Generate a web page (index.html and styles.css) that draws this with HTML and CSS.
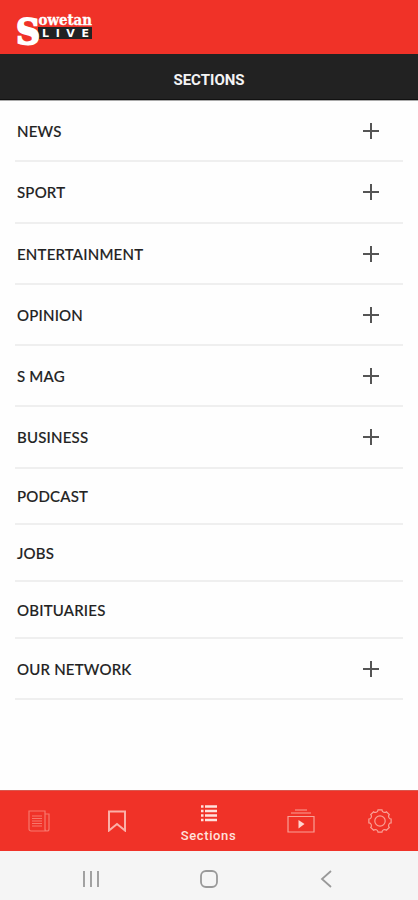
FILE: index.html
```html
<!DOCTYPE html>
<html lang="en">
    <head>
        <meta charset="UTF-8" />
        <meta name="viewport" content="width=device-width, initial-scale=1.0" />
        <title>Sowetan LIVE - Sections</title>
        <link rel="stylesheet" href="styles.css">
    </head>

    <body>
        <header class="header">
            <svg class="logo" width="80" height="42" viewBox="0 0 80 42">
                <rect class="logo-box" x="22" y="15" width="54" height="12" />
                <text class="logo-s" x="0" y="32" textLength="24" lengthAdjust="spacingAndGlyphs">S</text>
                <text class="logo-name" x="22.5" y="12.5" textLength="53.5" lengthAdjust="spacingAndGlyphs">owetan</text>
                <text class="logo-live" x="26" y="25" textLength="47">LIVE</text>
            </svg>
        </header>

        <h1 class="title">SECTIONS</h1>

        <ul class="sections">
            <li class="section expandable">NEWS</li>
            <li class="section expandable">SPORT</li>
            <li class="section expandable">ENTERTAINMENT</li>
            <li class="section expandable">OPINION</li>
            <li class="section expandable">S MAG</li>
            <li class="section expandable">BUSINESS</li>
            <li class="section">PODCAST</li>
            <li class="section">JOBS</li>
            <li class="section">OBITUARIES</li>
            <li class="section expandable">OUR NETWORK</li>
        </ul>

        <nav class="tabs">
            <a class="tab tab-news">
                <svg width="22" height="22" viewBox="0 0 22 22">
                    <path d="M1 1h16v20H3a2 2 0 0 1-2-2zM17 4h4v15a2 2 0 0 1-4 0M4 6h10M4 8.500h10M4 11h10M4 13.500h10M4 16h10" />
                </svg>
            </a>
            <a class="tab tab-saved">
                <svg width="20" height="22" viewBox="0 0 20 22">
                    <path d="M2 1.500h16v19l-8-6.500-8 6.500z" />
                </svg>
            </a>
            <a class="tab tab-sections">
                <svg width="16" height="17" viewBox="0 0 16 17">
                    <path d="M0 1.500h2.500M4 1.500h12M0 6h2.500M4 6h12M0 10.500h2.500M4 10.500h12M0 15h2.500M4 15h12" />
                </svg>
                <span>Sections</span>
            </a>
            <a class="tab tab-video">
                <svg width="28" height="24" viewBox="0 0 28 24">
                    <path d="M1 7.500h26v15.500H1zM4 4h20M8 1h12" />
                    <path class="play" d="M11.500 11l6 4-6 4.500z" />
                </svg>
            </a>
            <a class="tab tab-settings">
                <svg width="24" height="24" viewBox="0 0 24 24">
                    <path d="M10.040.87h3.920A2.700 2.700 0 0 0 18.480 2.740L21.260 5.520A2.700 2.700 0 0 0 23.130 10.040V13.960A2.700 2.700 0 0 0 21.260 18.480L18.480 21.260A2.700 2.700 0 0 0 13.960 23.130H10.040A2.700 2.700 0 0 0 5.520 21.260L2.740 18.480A2.700 2.700 0 0 0 .87 13.960V10.040A2.700 2.700 0 0 0 2.740 5.520L5.520 2.740A2.700 2.700 0 0 0 10.040.87z" />
                    <circle cx="12" cy="12" r="5.200" />
                </svg>
            </a>
        </nav>

        <footer class="system-bar">
            <svg width="18" height="18" viewBox="0 0 18 18">
                <path d="M2 1v16M9 1v16M16 1v16" />
            </svg>
            <svg width="18" height="18" viewBox="0 0 18 18">
                <rect x="1" y="1" width="16" height="16" rx="5" />
            </svg>
            <svg width="18" height="18" viewBox="0 0 18 18">
                <path d="M14 1L5 9l9 8" />
            </svg>
        </footer>
    </body>
</html>
```
FILE: styles.css
```css
* {
    box-sizing: border-box;
}

body {
    display: flex;
    flex-direction: column;
    height: 900px;
    margin: 0;
    background-color: #fefefe;
    font-family: Lato, sans-serif;
}

.header {
    height: 54px;
    padding: 12px 16px 0;
    background-color: #f03228;
}

.logo {
    display: block;
    overflow: visible;
}

.logo text {
    fill: #fff;
    font-family: "DejaVu Serif", serif;
    font-weight: bold;
}

.logo .logo-s {
    stroke: #fff;
    stroke-width: 2px;
    font-size: 36px;
}

.logo .logo-name {
    stroke: #fff;
    stroke-width: 0.3px;
    font-size: 14px;
}

.logo .logo-live {
    font-family: "DejaVu Sans", sans-serif;
    font-size: 11px;
}

.logo-box {
    fill: #222;
}

.title {
    height: 46px;
    margin: 0;
    background-color: #222;
    color: #f4f4f4;
    font-family: Roboto, sans-serif;
    font-size: 15px;
    font-weight: 700;
    line-height: 52px;
    text-align: center;
    border-bottom: 1px solid #111;
}

.sections {
    flex: 1;
    margin: 0;
    padding: 0 15px;
    border-top: 1px solid #aaa;
    list-style: none;
}

.section {
    display: flex;
    align-items: center;
    justify-content: space-between;
    height: 56.8px;
    padding: 1px 24px 0 2px;
    border-bottom: 2px solid #efefef;
    color: #222;
    font-size: 15px;
    font-weight: 500;
    letter-spacing: 0.2px;
    -webkit-text-stroke: 0.15px #222;
}

.expandable {
    height: 61.25px;
}

.expandable::after {
    content: "";
    width: 16px;
    height: 16px;
    background:
        linear-gradient(#555, #555) center / 16px 2px no-repeat,
        linear-gradient(#555, #555) center / 2px 16px no-repeat;
}

.tabs {
    display: grid;
    grid-template-columns: 77px 80px 103px 82px 76px;
    height: 61px;
    background-color: #f03228;
    border-top: 1px solid #d9584f;
}

.tab {
    display: flex;
    flex-direction: column;
    align-items: center;
    justify-content: center;
    color: #fff;
}

.tab svg {
    fill: none;
    stroke: #f9a096;
    stroke-width: 1.2px;
}

.tab-news svg {
    stroke: #f7776c;
}

.tab-saved svg {
    stroke: #fbb0a8;
    stroke-width: 2px;
}

.tab-sections {
    gap: 6px;
    padding-top: 6px;
    font-family: Roboto, sans-serif;
    font-size: 13px;
    font-weight: 500;
    line-height: 16px;
    letter-spacing: 0.6px;
    color: #ffe1dc;
}

.tab-sections svg {
    stroke: #ffe1dc;
    stroke-width: 2.4px;
}

.play {
    fill: #ffd4cf;
    stroke: none;
}

.system-bar {
    display: flex;
    align-items: center;
    justify-content: space-between;
    height: 49px;
    padding: 6px 83px 0 82px;
    background-color: #f5f5f5;
}

.system-bar svg {
    fill: none;
    stroke: #999;
    stroke-width: 1.8px;
}
```
